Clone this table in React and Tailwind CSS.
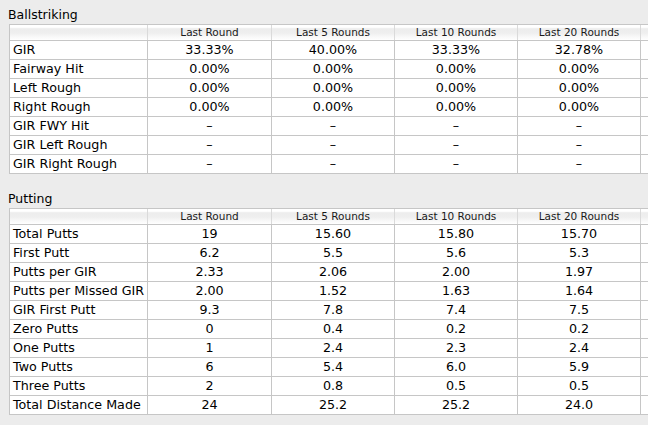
const cols = ["Last Round", "Last 5 Rounds", "Last 10 Rounds", "Last 20 Rounds", ""];

const ballstriking = [
  ["GIR", "33.33%", "40.00%", "33.33%", "32.78%"],
  ["Fairway Hit", "0.00%", "0.00%", "0.00%", "0.00%"],
  ["Left Rough", "0.00%", "0.00%", "0.00%", "0.00%"],
  ["Right Rough", "0.00%", "0.00%", "0.00%", "0.00%"],
  ["GIR FWY Hit", "–", "–", "–", "–"],
  ["GIR Left Rough", "–", "–", "–", "–"],
  ["GIR Right Rough", "–", "–", "–", "–"],
];

const putting = [
  ["Total Putts", "19", "15.60", "15.80", "15.70"],
  ["First Putt", "6.2", "5.5", "5.6", "5.3"],
  ["Putts per GIR", "2.33", "2.06", "2.00", "1.97"],
  ["Putts per Missed GIR", "2.00", "1.52", "1.63", "1.64"],
  ["GIR First Putt", "9.3", "7.8", "7.4", "7.5"],
  ["Zero Putts", "0", "0.4", "0.2", "0.2"],
  ["One Putts", "1", "2.4", "2.3", "2.4"],
  ["Two Putts", "6", "5.4", "6.0", "5.9"],
  ["Three Putts", "2", "0.8", "0.5", "0.5"],
  ["Total Distance Made", "24", "25.2", "25.2", "24.0"],
];

const grid = "grid grid-cols-[138px_124px_123px_123px_123px_100px]";

const StatTable = ({ rows }) => {
  return (
    <div className="w-[740px] border-l border-t border-[#c6c6c6] bg-white">
      {/* HEADER */}
      <div className={`${grid} h-[16px] bg-[linear-gradient(to_bottom,#ffffff_0%,#ffffff_15%,#ededed_25%,#efefef_55%,#f7f7f7_75%,#ffffff_100%)] border-b border-[#c6c6c6]`}>
        <div className="border-r border-[#dadada]" />
        {cols.map((c, i) => (
          <div
            key={i}
            className="border-r border-[#dadada] flex items-center justify-center text-[10.5px] leading-none text-[#1a1a1a]"
          >
            {c}
          </div>
        ))}
      </div>

      {/* ROWS */}
      {rows.map((r) => (
        <div key={r[0]} className={`${grid} h-[19px] border-b border-[#c6c6c6]`}>
          <div className="border-r border-[#c6c6c6] pl-[3px] pt-px flex items-center text-[12.7px] leading-none text-black whitespace-nowrap">
            {r[0]}
          </div>
          {r.slice(1).map((v, i) => (
            <div
              key={i}
              className="border-r border-[#c6c6c6] pt-px flex items-center justify-center text-[12.7px] leading-none text-black"
            >
              {v}
            </div>
          ))}
          <div />
        </div>
      ))}
    </div>
  );
};

export default function App() {
  return (
    <div className="w-[648px] h-[425px] overflow-hidden bg-[#ececec] pt-[6px] pl-[9px] font-['DejaVu_Sans',sans-serif]">
      <div className="h-[18px] -ml-px flex items-center text-[12.5px] text-black">Ballstriking</div>
      <StatTable rows={ballstriking} />

      <div className="mt-[16px] h-[18px] -ml-px flex items-center text-[12.5px] text-black">Putting</div>
      <StatTable rows={putting} />
    </div>
  );
}
